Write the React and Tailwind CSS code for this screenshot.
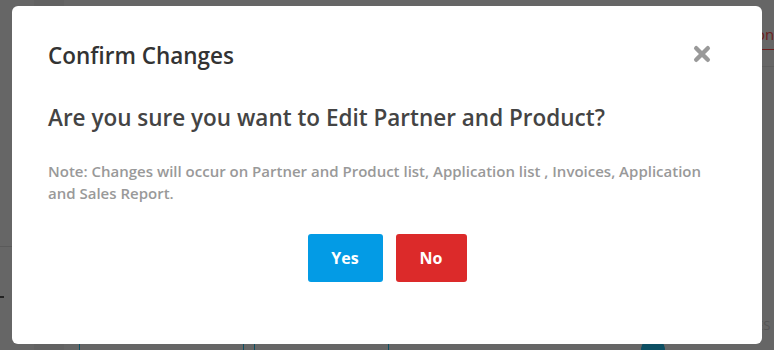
import React from "react";

function Background() {
  return (
    <div className="flex h-[350px] w-full bg-[#666666]">
      <div className="flex w-[34px] flex-col">
        <div className="h-[246px]" />
        <div className="h-px w-[12px] bg-[#5a5a5a]" />
        <div className="h-[49px]" />
        <div className="h-[2px] w-[4px] bg-[#222222]" />
      </div>
      <div className="w-[30px] bg-[#626262]" />
      <div className="flex flex-1 flex-col justify-end">
        <div className="flex items-end gap-[10px] pl-[15px]">
          <div className="h-[14px] w-[165px] rounded-t-[3px] border border-b-0 border-[#0d4f63]" />
          <div className="h-[14px] w-[135px] rounded-t-[3px] border border-b-0 border-[#0d4f63]" />
          <div className="ml-[242px] h-[12px] w-[24px] rounded-t-full bg-[#0d4f63]" />
        </div>
      </div>
      <div className="flex w-[14px] flex-col pt-[22px] text-[#6b1d1d]">
        <div className="-ml-[4px] text-[15px] leading-[24px]">on</div>
        <div className="mt-[3px] h-px bg-[#6b1d1d]" />
        <div className="mt-[16px] h-px bg-[#5e5e5e]" />
        <div className="flex-1" />
        <div className="-ml-[4px] mb-[16px] text-[13px] leading-[18px] text-[#555555]">ES</div>
      </div>
    </div>
  );
}

export default function App() {
  return (
    <div
      className="relative h-[350px] w-full overflow-hidden"
      style={{ fontFamily: '"Open Sans", "Liberation Sans", sans-serif' }}
    >
      <Background />

      <div className="absolute inset-0 flex items-center justify-center">
        <div className="flex h-[338px] w-[750px] flex-col rounded-[6px] bg-white px-[36px] pt-[34px]">
          <div className="flex items-start justify-between">
            <h2 className="text-[22.5px] font-semibold leading-[32px] text-[#333333]">Confirm Changes</h2>
            <button className="mr-[15px] mt-[5px] flex h-[18px] w-[18px] items-center justify-center">
              <svg width="18" height="18" viewBox="0 0 18 18">
                <path d="M3.2 3.2 L14.8 14.8 M14.8 3.2 L3.2 14.8" stroke="#999999" strokeWidth="4.4" strokeLinecap="round" />
              </svg>
            </button>
          </div>
          <p className="mt-[31px] text-[22.5px] font-semibold leading-[30px] text-[#444444]">
            Are you sure you want to Edit Partner and Product?
          </p>
          <p className="mt-[27px] text-[15px] font-semibold leading-[22px] text-[#999999]">
            Note: Changes will occur on Partner and Product list, Application list , Invoices, Application and Sales Report.
          </p>
          <div className="mt-[30px] flex justify-center gap-[13px]">
            <button className="h-[48px] w-[75px] rounded-[3px] bg-[#039be5] text-[16px] font-bold text-white">Yes</button>
            <button className="h-[48px] w-[71px] rounded-[3px] bg-[#dc2a2a] text-[16px] font-bold text-white">No</button>
          </div>
        </div>
      </div>
    </div>
  );
}
